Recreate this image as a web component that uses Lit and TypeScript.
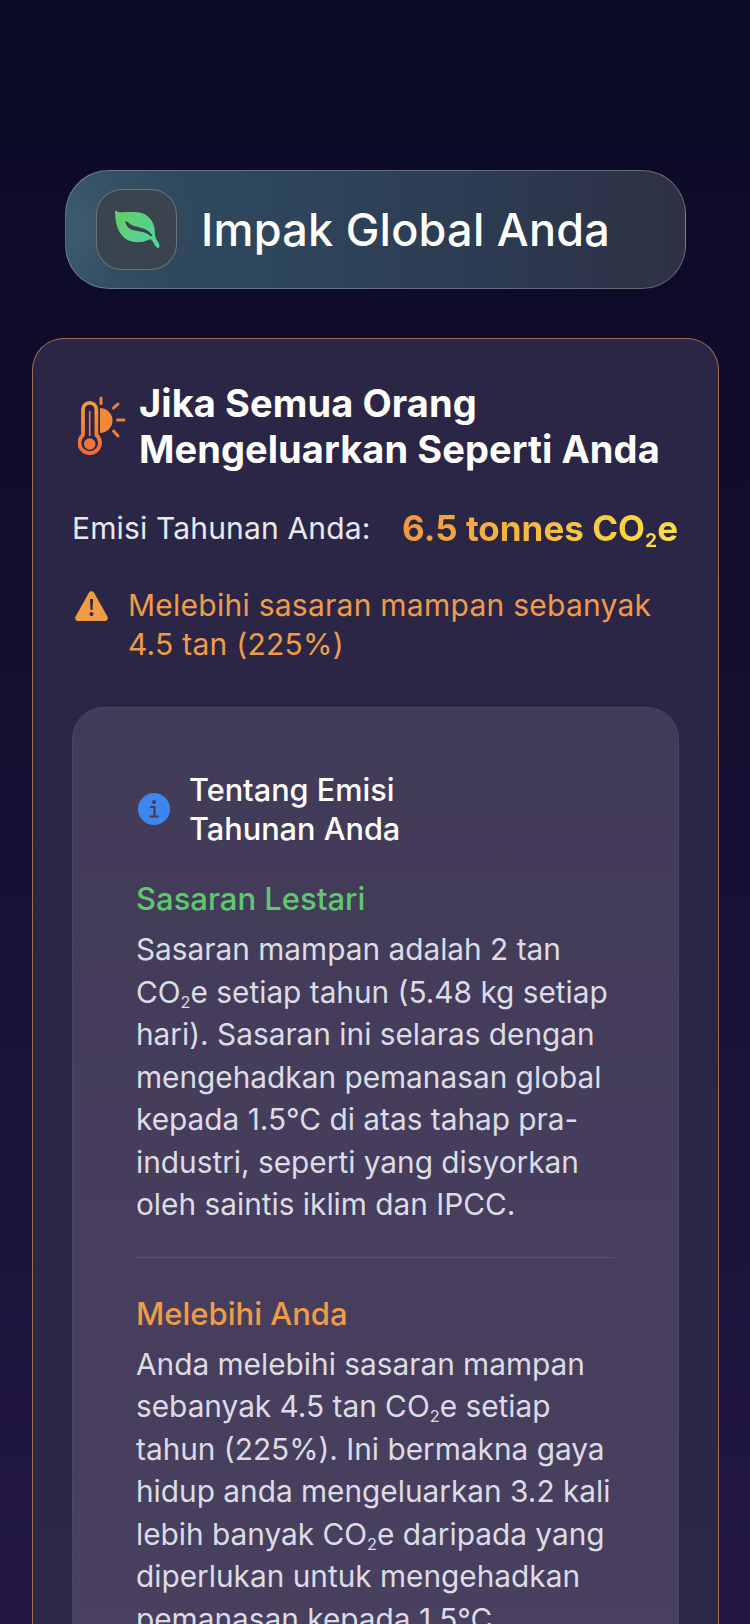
import { LitElement, html, css } from "lit";
import { customElement } from "lit/decorators.js";

@customElement("app-root")
export class AppRoot extends LitElement {
  static styles = css`
    :host { display: block; width: 750px; height: 1624px; overflow: hidden; font-family: Inter, "Noto Sans", sans-serif; color: #fff; }
    .page { box-sizing: border-box; height: 1624px; overflow: hidden; padding: 170px 31px 0 32px; background: linear-gradient(180deg, #0b0b24 0%, #100c2c 25%, #1a1238 65%, #221843 100%); }
    .hdr { box-sizing: border-box; margin: 0 33px 0 33px; height: 119px; border-radius: 44px; border: 1.5px solid rgba(255,255,255,.26); background: radial-gradient(ellipse 110px 90px at 30px 50%, rgba(90,125,140,.4), transparent 100%), linear-gradient(90deg, #2f4a60 0%, #2e465c 35%, #2c3a50 70%, #2e3144 100%); display: flex; align-items: center; padding-left: 30px; gap: 24px; }
    .logo { box-sizing: border-box; width: 81px; height: 81px; border-radius: 26px; border: 1.5px solid rgba(255,255,255,.25); background: #39444e; display: flex; align-items: center; justify-content: center; box-shadow: 0 4px 24px rgba(0,0,0,.15); flex: none; }
    .hdr h1 { margin: 0; font-size: 45px; font-weight: 500; letter-spacing: .25px; line-height: 1; color: #fff; }
    .card { box-sizing: border-box; margin-top: 49px; border: 1.5px solid #a06d50; border-bottom: none; border-radius: 32px 32px 0 0; background: linear-gradient(180deg, #2b2645 0%, #2c2648 100%); padding: 41px 39px 0; height: 1400px; }
    .title { display: flex; align-items: center; gap: 13px; margin-left: 6px; }
    .title svg { flex: none; }
    .title h2 { margin: 0; font-size: 38px; line-height: 46px; font-weight: 700; letter-spacing: .08px; white-space: nowrap; }
    .emis { display: flex; justify-content: space-between; align-items: center; margin-top: 35px; }
    .emis .l { font-size: 30px; letter-spacing: .15px; color: #e8e8f2; }
    .emis .v { font-size: 35px; font-weight: 700; padding-right: 1px; background: linear-gradient(90deg, #f0993e, #fbdf45); -webkit-background-clip: text; background-clip: text; color: transparent; }
    sub { font-size: .55em; line-height: 0; vertical-align: -0.3em; }
    .warn { display: flex; gap: 20px; margin-top: 37px; font-size: 30px; line-height: 39px; letter-spacing: .25px; color: #ef9c4a; align-items: flex-start; padding-left: 3px; }
    .warn svg { flex: none; margin-top: 5px; }
    .inner { margin-top: 43px; border: 1.5px solid #434670; border-radius: 32px; background: linear-gradient(180deg, #423b58 0%, #4a4160 100%); padding: 62px 64px 0 63px; height: 1100px; box-sizing: border-box; }
    .it { display: flex; align-items: center; gap: 19px; font-size: 30.700px; font-weight: 500; line-height: 39px; color: #fff; padding-left: 2px; }
    .it svg { flex: none; }
    h3 { margin: 0; font-size: 31px; line-height: 40px; font-weight: 500; }
    .g { color: #5fc86e; margin-top: 31px; }
    .o { color: #ef9c4a; }
    p { margin: 9px 0 0; font-size: 29.800px; line-height: 42.500px; color: #dcdce6; white-space: nowrap; }
    .sep { height: 1px; background: rgba(255,255,255,.1); margin: 31px 0 36px; }
  `;
  render() {
    return html`<div class="page">
      <div class="hdr">
        <div class="logo">
          <svg width="46" height="39" viewBox="0 0 45 38"><defs><linearGradient id="lg" x1="0" y1="0" x2="1" y2="1"><stop offset="0" stop-color="#66cc66"/><stop offset="1" stop-color="#4fd6a4"/></linearGradient></defs>
            <path fill="url(#lg)" d="M1 .5C5 3 9 2 16 2C22 2 28 2 33 6C38 10 40 16 40 23C40 26 41 28 43 31C45 34 45 37 43 37C41 37 40 34 38 31C37 29 36 28 34 29C26 33 16 32 10 27C4 22 1 13 1 .5Z"/>
            <path fill="#39444e" d="M11 11C14 11 15 14 18 15C24 17 32 17 37 24C38 26 36 26 35 25C31 21 25 21 20 20C15 19 12 16 11 11Z"/></svg>
        </div>
        <h1>Impak Global Anda</h1>
      </div>
      <div class="card">
        <div class="title">
          <svg width="48" height="60" viewBox="0 0 48 60"><defs><linearGradient id="tg" x1="0" y1="0" x2="0" y2="1"><stop offset="0" stop-color="#f29a3e"/><stop offset="1" stop-color="#ee6c3a"/></linearGradient></defs>
            <path fill="none" stroke="url(#tg)" stroke-width="3.800" d="M5 39V13.500A6.700 6.700 0 0 1 18.400 13.500V39A10.300 10.300 0 1 1 5 39Z"/>
            <path fill="none" stroke="#ef823c" stroke-width="1.600" d="M11.700 15V40"/>
            <circle cx="11.700" cy="48" r="5.800" fill="#ef763a"/>
            <path fill="#f0893a" d="M22 12A12.500 12.500 0 0 1 22 37Z"/>
            <g stroke="#f0823c" stroke-width="3" stroke-linecap="round" fill="none"><path d="M23 2V7.500"/><path d="M40 8L35.500 12"/><path d="M39.500 24H46"/><path d="M35.500 35L40 40"/></g></svg>
          <h2>Jika Semua Orang<br>Mengeluarkan Seperti Anda</h2>
        </div>
        <div class="emis"><span class="l">Emisi Tahunan Anda:</span><span class="v">6.5 tonnes CO<sub>2</sub>e</span></div>
        <div class="warn">
          <svg width="33" height="30" viewBox="0 0 33 30"><path fill="#f09c45" d="M14 1.500a3 3 0 0 1 5 0L32.400 25.500a3 3 0 0 1-2.500 4.500H3A3 3 0 0 1 .6 25.500Z"/><path fill="#2c2746" d="M15 8h3l-.5 11h-2ZM16.500 21a2 2 0 1 1 0 4 2 2 0 0 1 0-4Z"/></svg>
          <div>Melebihi sasaran mampan sebanyak<br>4.5 tan (225%)</div>
        </div>
        <div class="inner">
          <div class="it">
            <svg width="32" height="32" viewBox="0 0 32 32"><circle cx="16" cy="16" r="16" fill="#3d86ee"/><circle cx="16" cy="9" r="2" fill="#433c58"/><path fill="none" stroke="#433c58" stroke-width="2.200" d="M12 14H16.500V23M11.500 23.500H20.500"/></svg>
            <div>Tentang Emisi<br>Tahunan Anda</div>
          </div>
          <h3 class="g">Sasaran Lestari</h3>
          <p>Sasaran mampan adalah 2 tan<br>CO<sub>2</sub>e setiap tahun (5.48 kg setiap<br>hari). Sasaran ini selaras dengan<br>mengehadkan pemanasan global<br>kepada 1.5°C di atas tahap pra-<br>industri, seperti yang disyorkan<br>oleh saintis iklim dan IPCC.</p>
          <div class="sep"></div>
          <h3 class="o">Melebihi Anda</h3>
          <p>Anda melebihi sasaran mampan<br>sebanyak 4.5 tan CO<sub>2</sub>e setiap<br>tahun (225%). Ini bermakna gaya<br>hidup anda mengeluarkan 3.2 kali<br>lebih banyak CO<sub>2</sub>e daripada yang<br>diperlukan untuk mengehadkan<br>pemanasan kepada 1.5°C.</p>
        </div>
      </div>
    </div>`;
  }
}
